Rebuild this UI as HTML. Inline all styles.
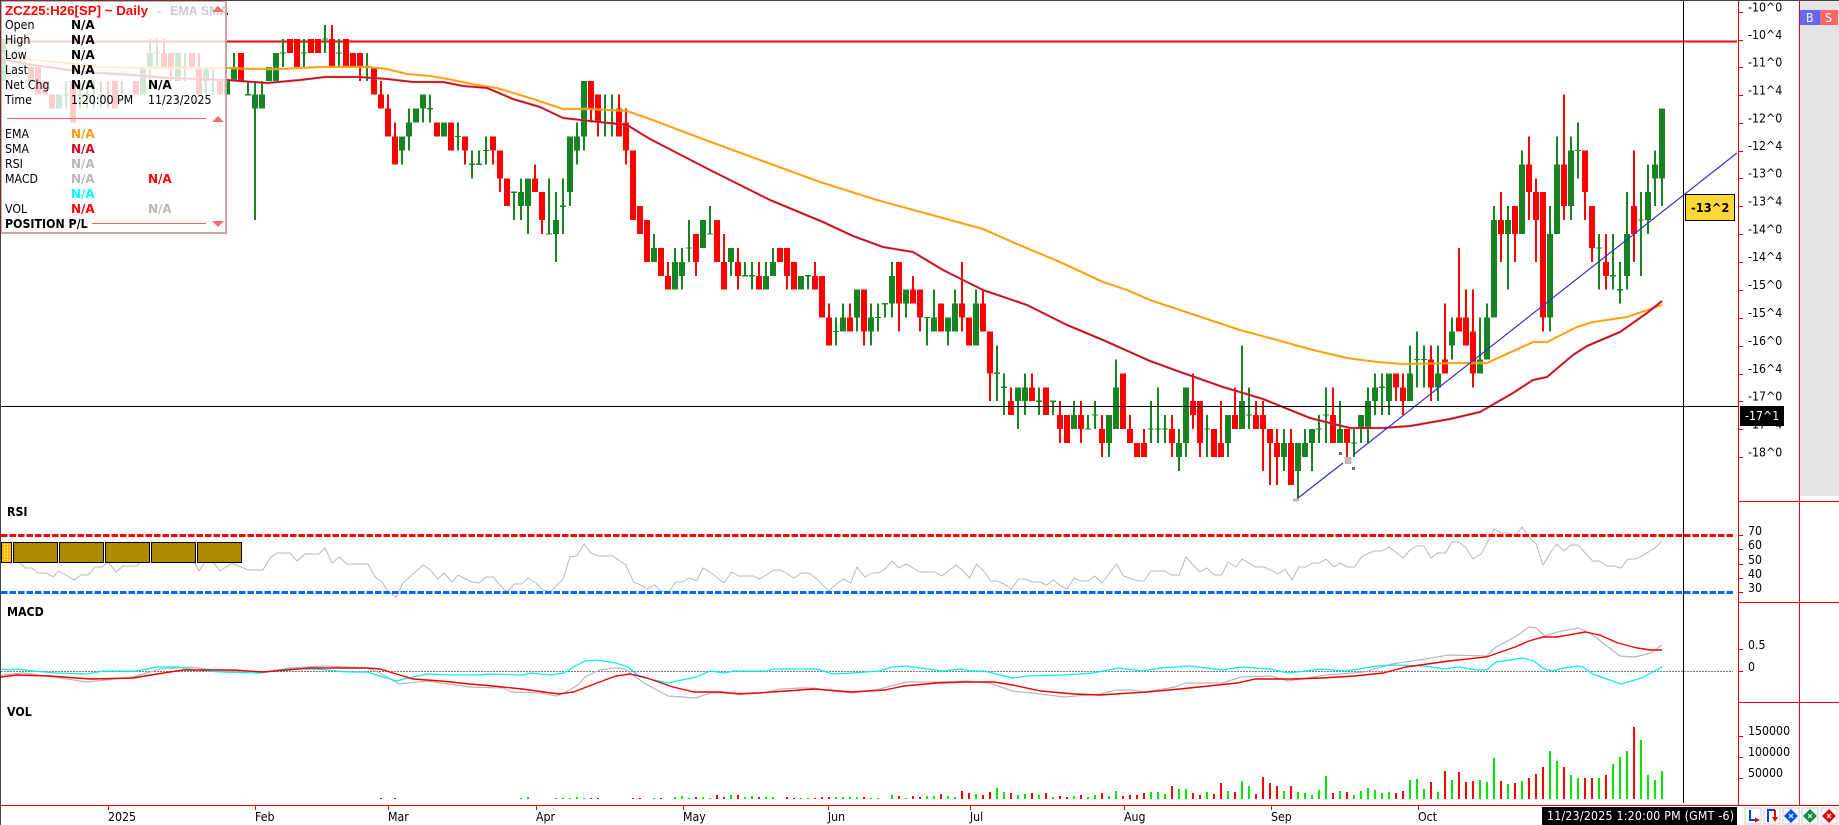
<!DOCTYPE html>
<html lang="en">
<head>
<meta charset="utf-8">
<title>ZCZ25:H26[SP] Daily</title>
<style>
html,body{margin:0;padding:0;background:#fff;width:1839px;height:825px;overflow:hidden}
svg{position:absolute;left:0;top:0;display:block}
text{font-family:"DejaVu Sans","Liberation Sans",sans-serif;font-size:12px;fill:#000;transform-box:fill-box;transform-origin:0 50%;transform:scaleX(.92)}
.b{font-weight:bold}
.n{font-weight:bold;transform:none}
.t{font-family:"Liberation Sans",sans-serif;font-weight:bold;font-size:13.3px;transform:none}
</style>
</head>
<body>
<svg width="1839" height="825" viewBox="0 0 1839 825" xmlns="http://www.w3.org/2000/svg">
<defs>
<pattern id="hatch" width="3" height="3" patternUnits="userSpaceOnUse"><rect width="3" height="3" fill="#ffbf00"/><rect x="1" y="1" width="1" height="1" fill="#fff3b0"/></pattern>
</defs>
<rect width="1839" height="825" fill="#fff"/>
<rect x="1800" y="1" width="39" height="495" fill="#e4e4e4"/>

<!-- horizontal resistance line -->
<path d="M1 41.5H1737" stroke="#ff9a9a" stroke-width="3" fill="none" shape-rendering="crispEdges"/>
<path d="M1 41.5H1737" stroke="#e8141f" stroke-width="1.6" fill="none"/>

<!-- candles -->
<g transform="translate(3,39) scale(7,13.93)" fill="none" shape-rendering="crispEdges">
<path stroke="#178423" stroke-width=".286" d="M9 3V5M11 3V5M12 3V5M13 3V5M14 3V5M17 3V4M21 0V3M22 0V2M26 1V3M29 2V4M30 2V4M33 1V3M35 3V4M36 3V13M37 3V5M40 0V2M43 0V2M46 -1V1M48 0V2M52 1V3M57 7V9M58 5V8M60 4V6M61 4V6M65 6V8M67 8V10M68 8V9M69 7V9M73 11V13M74 10V13M75 10V14M78 10V14M79 11V16M80 10V14M81 7V12M82 6V9M83 3V8M86 4V7M87 4V7M93 14V16M96 15V18M97 15V18M98 13V16M101 12V14M104 15V17M106 16V17M107 16V18M109 16V18M110 15V17M115 17V18M119 20V22M120 19V21M122 18V21M124 19V22M125 19V21M126 19V20M127 16V20M129 18V20M132 20V22M133 18V21M135 20V22M136 18V21M139 18V22M142 22V26M143 24V27M145 25V28M146 24V27M148 25V27M150 26V27M153 26V28M155 27V28M156 26V28M158 27V30M159 23V28M164 26V29M165 25V29M166 27V29M168 28V31M169 25V30M172 27V30M175 27V30M177 22V28M178 25V28M183 28V31M185 29V33M186 28V30M187 28V31M188 27V29M189 25V29M191 26V29M193 28V30M194 27V29M195 25V29M196 24V27M197 24V27M198 24V27M201 22V26M202 21V25M203 22V25M205 22V26M207 20V23M211 20V24M212 19V23M213 12V20M215 12V18M217 8V14M221 12V21M222 7V14M224 7V13M225 6V10M228 14V18M230 14V18M231 16V19M232 11V18M234 11V17M235 9V14M236 8V12M237 5V12"/>
<path stroke="#178423" stroke-width=".857" d="M0 0V3M8 4V5M20 2V4M21 1V2M25 1V3M29 2V3M32 3V4M33 2V3M36 4V5M37 4V5M38 2V3M39 1V3M57 7V8M58 6V7M59 5V6M60 4V5M63 6V7M74 11V12M75 10V12M79 13V14M81 7V11M82 7V8M83 3V7M93 15V16M96 16V18M97 16V17M100 13V15M104 15V16M109 17V18M110 16V17M114 17V18M120 20V21M122 18V20M124 20V21M127 17V19M129 18V19M133 20V21M135 20V21M136 19V21M139 19V22M145 25V26M146 25V26M153 27V28M158 27V29M159 25V28M168 29V30M169 25V29M175 27V29M177 26V28M183 29V30M185 29V31M186 29V30M187 28V29M191 28V29M194 27V28M195 26V28M196 25V26M198 24V26M201 24V26M205 24V25M207 21V22M211 23V24M212 20V23M213 13V20M215 13V14M217 9V14M221 14V20M222 9V14M224 8V12M232 14V17M235 11V13M236 9V10M237 5V10"/>
<path stroke="#178423" stroke-width=".09" d="M8.57 4h.86M10.57 4h.86M11.57 4h.86M13.57 4h.86M21.57 1h.86M25.57 2h.86M34.57 4h.86M39.57 1h.86M42.57 1h.86M45.57 0h.86M47.57 1h.86M51.57 2h.86M60.57 5h.86M64.57 7h.86M66.57 9h.86M67.57 9h.86M68.57 8h.86M72.57 11h.86M77.57 14h.86M79.57 12h.86M85.57 6h.86M86.57 6h.86M97.57 15h.86M100.57 14h.86M105.57 17h.86M106.57 17h.86M114.57 17h.86M118.57 21h.86M124.57 20h.86M125.57 19h.86M131.57 20h.86M141.57 24h.86M142.57 25h.86M147.57 26h.86M149.57 26h.86M154.57 28h.86M155.57 27h.86M163.57 28h.86M164.57 28h.86M165.57 28h.86M171.57 28h.86M177.57 27h.86M187.57 28h.86M188.57 27h.86M192.57 29h.86M196.57 25h.86M201.57 23h.86M202.57 23h.86M224.57 8h.86M227.57 15h.86M229.57 17h.86M230.57 18h.86M233.57 13h.86"/>
<path stroke="#ff0000" stroke-width=".286" d="M15 3V5M23 0V2M24 1V3M28 1V4M47 -1V2M51 1V3M54 3V5M55 4V7M56 6V9M66 7V9M70 7V9M71 8V11M76 9V11M77 11V14M84 3V6M85 4V7M88 4V7M89 5V9M95 16V18M99 14V17M103 14V18M105 15V18M108 16V18M112 15V18M116 16V18M118 19V22M121 19V21M123 18V22M128 16V21M130 17V19M131 18V21M137 16V21M140 18V21M141 21V26M144 25V27M147 24V26M151 26V29M154 26V29M157 27V30M161 27V29M163 28V30M167 27V30M170 24V28M171 26V30M174 26V30M176 25V28M179 26V28M180 26V31M181 28V32M182 28V32M184 28V32M190 25V29M192 28V30M199 24V26M200 24V27M204 22V26M206 19V24M208 15V21M209 18V22M210 18V25M214 11V16M216 12V16M218 7V13M219 10V16M220 11V21M223 4V13M226 8V13M227 12V16M229 14V18M233 8V16"/>
<path stroke="#ff0000" stroke-width=".857" d="M4 2V3M5 2V4M6 3V4M7 4V5M10 3V6M16 3V5M19 3V4M23 1V2M24 1V2M27 1V2M28 2V4M31 3V4M34 1V3M41 0V1M42 0V2M44 0V1M45 0V1M47 0V2M49 0V2M50 1V2M51 1V2M53 2V4M54 4V5M55 5V7M56 7V9M62 6V7M64 6V8M66 7V8M70 7V8M71 8V10M72 10V12M76 10V11M77 11V13M84 3V5M85 4V6M88 5V7M89 6V8M90 8V13M91 12V14M92 13V16M94 15V17M95 17V18M99 14V16M102 13V16M103 16V18M105 16V17M108 17V18M111 15V16M112 15V17M113 16V18M116 17V18M117 17V20M118 20V22M121 20V21M123 18V21M128 16V19M130 18V19M131 18V20M134 19V21M137 19V20M138 20V22M140 19V21M141 21V24M144 26V27M147 25V26M149 25V27M151 27V28M152 27V29M154 27V28M157 28V29M160 24V28M161 28V29M162 29V30M163 29V30M167 28V29M170 26V27M171 26V29M173 28V30M174 29V30M176 27V28M179 27V28M180 27V28M181 28V29M182 29V30M184 29V32M190 27V29M192 28V29M199 24V25M200 25V26M204 23V25M206 23V24M208 20V21M209 20V22M210 21V24M214 13V14M216 12V14M218 9V11M219 11V13M220 11V20M223 9V12M226 8V11M227 12V15M229 16V17M233 12V14"/>
</g>

<!-- moving averages -->
<g fill="none" stroke-linejoin="round">
<polyline stroke="#ffcf80" stroke-width="3" opacity=".35" points="0,55 7,56 33,60 67,63 100,67 150,68 227,68 253,69 280,69 300,68 320,67 367,67 387,69 407,74 430,76 453,80 477,85 497,88 533,99 563,109 590,109 627,111 650,119 700,138 760,160 820,182 877,200 983,229 1017,244 1060,262 1103,282 1127,290 1150,300 1195,315 1240,330 1277,340 1313,350 1347,358 1377,362 1403,364 1457,363 1487,363 1533,342 1547,342 1577,327 1593,322 1627,317 1662,305"/>
<polyline stroke="#ff9d0a" stroke-width="1.8" points="0,55 7,56 33,60 67,63 100,67 150,68 227,68 253,69 280,69 300,68 320,67 367,67 387,69 407,74 430,76 453,80 477,85 497,88 533,99 563,109 590,109 627,111 650,119 700,138 760,160 820,182 877,200 983,229 1017,244 1060,262 1103,282 1127,290 1150,300 1195,315 1240,330 1277,340 1313,350 1347,358 1377,362 1403,364 1457,363 1487,363 1533,342 1547,342 1577,327 1593,322 1627,317 1662,305"/>
<polyline stroke="#e88a90" stroke-width="3" opacity=".4" points="0,59 33,65 83,72 133,75 167,78 227,80 267,83 300,80 325,77 360,77 387,79 413,82 443,82 463,86 487,88 513,99 540,107 563,118 590,121 627,125 650,139 710,170 770,200 823,222 853,236 883,247 913,252 943,270 983,290 1027,305 1067,325 1103,340 1150,361 1183,373 1223,387 1263,399 1310,418 1350,428 1383,428 1410,426 1450,419 1480,412 1513,393 1533,380 1547,377 1573,355 1587,346 1620,332 1647,313 1662,301"/>
<polyline stroke="#c30f1d" stroke-width="1.8" points="0,59 33,65 83,72 133,75 167,78 227,80 267,83 300,80 325,77 360,77 387,79 413,82 443,82 463,86 487,88 513,99 540,107 563,118 590,121 627,125 650,139 710,170 770,200 823,222 853,236 883,247 913,252 943,270 983,290 1027,305 1067,325 1103,340 1150,361 1183,373 1223,387 1263,399 1310,418 1350,428 1383,428 1410,426 1450,419 1480,412 1513,393 1533,380 1547,377 1573,355 1587,346 1620,332 1647,313 1662,301"/>
</g>

<!-- trendline -->
<path d="M1298 498L1343 463M1353 455L1737 153" stroke="#3232c8" stroke-width="1.2" fill="none"/>
<rect x="1293" y="498.5" width="6" height="3" fill="#bbb"/>
<rect x="1345" y="457.5" width="6" height="6" fill="#bdbdbd" stroke="#999" stroke-width=".5"/>
<rect x="1339" y="452" width="3" height="3" fill="#666"/>
<rect x="1352" y="467" width="3" height="3" fill="#666"/>

<!-- crosshair -->
<path d="M1 406.5H1738M1683.5 1V803" stroke="#000" stroke-width="1" fill="none" shape-rendering="crispEdges"/>

<!-- RSI -->
<text class="b" x="7" y="516">RSI</text>
<polyline fill="none" stroke="#b8b8b8" stroke-width="1" points="13,560 20,563 25,568 32,568 38,573 46,573 53,577 59,571 74,580 81,575 88,575 95,567 102,567 108,562 116,572 123,566 137,566 143,558 195,563 199,571 205,562 213,562 220,571 232,563 248,570 263,570 270,558 277,553 290,553 297,561 305,554 319,554 325,548 332,563 339,557 347,564 368,564 375,577 382,582 388.5,592 396,597 403,583 423,565 430.5,570 437.6,579 444,573 452,582 458,575 465.4,579 472,582 479,583 486,577 493,577 500,585 506.5,592 514.5,584 521.6,584 528,578 536,583 543,590 550,592 563,579 570,557 577,556 584,544 591,553 598.5,556 612.7,556 620,561 626,565 633.5,582 640.5,585 647.6,589 654.7,585 661,591 668.4,592 676,582 682.5,582 689.6,578 696.7,581 703,568 710,572 724,583 731.6,572 738.7,576 753,576 760,579 774,570 781,570 794,578 801.5,573 808.6,573 815.6,578 829,591 836.4,584 843.5,579 850.6,583 857,567 865,577 872,573 878.5,573 885,569 892,561 899,568 906,564 920,572 934.6,572 941.7,576 956,565 963,571 969.5,578 976.6,564 983.7,571 990.7,581 997,581 1004,584 1011.5,589 1018.6,579 1025,579 1032.5,582 1039.6,582 1046.6,585 1053.5,580 1060.6,586 1067,589 1074,578 1081,581 1088,581 1095,576 1102,583 1116.5,564 1123.6,576 1138,581 1144,581 1151,571 1165,571 1171.6,575 1179,575 1186,557 1193,565 1200,572 1207,568 1214.5,575 1221.6,575 1228,562 1236,567 1242,559 1255.5,567 1264,567 1278,574 1285,569 1292,580 1299,567 1305.5,567 1312.6,563 1319.6,563 1326,559 1334,567 1340,563 1347.4,567 1354.5,567 1361.6,557 1368.6,553 1375,551 1382,551 1389,547 1403,558 1410,550 1416.7,546 1424,546 1431,558 1438,553 1445.5,553 1452,542 1459,542 1466,548 1473,559 1481,554 1487,543 1494,529 1501,533 1508,533 1515,536 1522,527 1529,537 1536,544 1543,565 1551.5,551 1557,544 1564,551 1571,545 1578,545 1592.5,561 1599.6,561 1606.6,566 1613.7,566 1621,568 1628,559 1635,559 1642,556 1655,548 1662,541"/>
<path d="M1 535.5H1733" stroke="#ff0000" stroke-width="3" stroke-dasharray="6.5 2" fill="none" shape-rendering="crispEdges"/>
<path d="M1 592.5H1733" stroke="#0066ff" stroke-width="3" stroke-dasharray="6.5 2" fill="none" shape-rendering="crispEdges"/>
<rect x="1.5" y="542.5" width="10" height="20" fill="url(#hatch)" stroke="#000"/>
<g fill="#ad8a00" stroke="#000" stroke-width="1" shape-rendering="crispEdges">
<rect x="13.5" y="542.5" width="44" height="20"/>
<rect x="59.5" y="542.5" width="44" height="20"/>
<rect x="105.5" y="542.5" width="44" height="20"/>
<rect x="151.5" y="542.5" width="44" height="20"/>
<rect x="197.5" y="542.5" width="44" height="20"/>
</g>

<!-- MACD -->
<text class="b" x="7" y="616">MACD</text>
<path d="M1 671.5H1733" stroke="#777" stroke-width="1" stroke-dasharray="2 1" fill="none" shape-rendering="crispEdges"/>
<polyline fill="none" stroke="#b8b8b8" stroke-width="1.2" points="1,675 23,673 53,677 87,682 133,677 160,669 190,667 213,670 263,672 290,668 323,666 367,668 380,673 399,684 427,681 470,687 503,688 512,692 540.5,693 557,696 564,693 578,685 585,677 599.5,670 614,668 625,669 644,683 668,696 696,698 710,693 724.6,693 739,693 762,693 781,689 800,688 814,688 833,691 852,693 880,689 906,682 937,682 965,681 989,683 1012.5,691 1041,694 1064,697 1100,694 1116.5,690 1131,690 1145,692 1175,687 1185,683 1222.5,683 1241,677 1270,676 1288.5,681 1326,675 1364,672 1392,664 1425,659 1449,655 1486.5,656 1496,647 1515,637 1529,627 1536,628 1545,636 1557,632 1578,628 1590,633 1620,656 1635,657 1651,653 1662,645"/>
<polyline fill="none" stroke="#00f0f0" stroke-width="1.2" points="1,669 10,670 17,669 33,671 57,673 87,674 103,671 137,671 157,667 177,667 197,670 220,672 260,673 287,669 317,669 347,672 367,672 380,676 396.5,681 408,678 427,674 451,675 474,675 493,674 522,675 531,673 550,675 564,673 573.5,667 585,661 597,660 616,663 628,667 640,677 668,683 696,677 710,671 724.6,673 734,671 767,671 774,669 816.6,669 833,674 852,673 880,671 892,667 906,666 927.5,669 942,671 960.6,669 970,671 984,671 1012.5,678 1027,676 1064,675 1093,673 1119,668 1142,671 1161,668 1190,666 1222.5,670 1241,667 1270,669 1288.5,673 1321.5,669 1345,671 1378,666 1392,665 1425,666 1444,669 1458,667 1477,670 1486.5,670 1496,662 1510,660 1522,658 1534,661 1544,669 1552.4,671 1559.5,669 1576,666 1583,667 1592.5,674 1621,684 1642,678 1662,667"/>
<polyline fill="none" stroke="#f00000" stroke-width="1.4" points="1,677 17,675 50,676 90,679 133,678 157,674 183,670 233,670 263,672 310,668 367,668 380,669 413,679 441,681 470,684 493,686 522,689 559,694 573.5,692 597,683 616,676 630,674 644,677 673,687 694,692 720,692 739,694 758,693 786,691 814,689 852,692 885,690 904,686 937,683 965,682 994,682 1012.5,685 1041,691 1074,694 1100,695 1147,692 1180,689 1237,683 1255.5,679 1293,679 1321.5,678 1354.5,676 1383,673 1406,667 1449,661 1486.5,657 1515,647 1529,641 1543,637 1557,637 1585,632 1599.6,635 1618,643 1637,648 1651,650 1662,650"/>

<!-- VOL -->
<text class="b" x="7" y="716">VOL</text>
<g transform="translate(3,799) scale(7,-1)" fill="none" stroke-width=".286" shape-rendering="crispEdges">
<path stroke="#00e600" d="M74 0V1M75 0V2M79 0V1M80 0V1M81 0V1M82 0V2M83 0V1M93 0V1M96 0V2M97 0V3M98 0V1M100 0V2M101 0V1M104 0V4M106 0V2M107 0V3M109 0V2M110 0V2M114 0V1M115 0V1M119 0V2M120 0V2M121 0V2M122 0V2M124 0V1M125 0V1M127 0V4M129 0V1M132 0V3M133 0V3M135 0V3M136 0V2M139 0V5M142 0V11M143 0V7M145 0V4M146 0V5M148 0V4M150 0V2M153 0V3M155 0V2M156 0V4M158 0V3M159 0V8M164 0V7M165 0V7M166 0V5M168 0V10M169 0V10M172 0V7M175 0V8M177 0V18M178 0V13M183 0V8M185 0V7M186 0V6M187 0V4M188 0V9M189 0V23M191 0V8M193 0V4M194 0V8M195 0V11M196 0V9M197 0V6M198 0V7M201 0V19M202 0V20M203 0V10M205 0V7M207 0V19M211 0V19M212 0V17M213 0V41M215 0V15M217 0V18M221 0V48M222 0V38M224 0V24M225 0V21M228 0V21M230 0V35M231 0V42M232 0V48M234 0V59M235 0V24M236 0V19M237 0V28"/>
<path stroke="#ff0000" d="M54 0V1M56 0V1M84 0V1M85 0V1M90 0V1M91 0V1M94 0V1M99 0V2M102 0V4M103 0V2M105 0V4M108 0V2M112 0V2M113 0V1M116 0V1M117 0V2M118 0V2M123 0V2M128 0V3M130 0V3M131 0V2M134 0V5M137 0V8M138 0V6M140 0V4M141 0V7M144 0V6M147 0V6M149 0V6M151 0V3M152 0V2M154 0V4M157 0V6M160 0V3M161 0V4M162 0V4M163 0V6M167 0V13M170 0V6M171 0V4M173 0V5M174 0V16M176 0V7M179 0V5M180 0V22M181 0V16M182 0V13M184 0V13M190 0V6M192 0V7M199 0V6M200 0V8M204 0V17M206 0V28M208 0V27M209 0V17M210 0V18M214 0V18M216 0V16M218 0V21M219 0V25M220 0V32M223 0V32M226 0V21M227 0V21M229 0V24M233 0V72"/>
</g>

<!-- frame -->
<path d="M0 .5H1839M.5 0V825" stroke="#444" stroke-width="1" fill="none" shape-rendering="crispEdges"/>
<g stroke="#ee0000" stroke-width="1" fill="none" shape-rendering="crispEdges">
<path d="M1738.5 1V805M1799.5 1V805"/>
<path d="M1 805.5H1839"/>
<path d="M1738 501.5H1839M1738 602.5H1839M1738 702.5H1839"/>
<path d="M1738 12.5h5M1738 40.5h5M1738 67.5h5M1738 95.5h5M1738 123.5h5M1738 151.5h5M1738 178.5h5M1738 206.5h5M1738 234.5h5M1738 262.5h5M1738 290.5h5M1738 318.5h5M1738 346.5h5M1738 374.5h5M1738 401.5h5M1738 429.5h5M1738 457.5h5"/>
<path d="M1738 535.5h5M1738 549.5h5M1738 564.5h5M1738 578.5h5M1738 592.5h5M1738 649.5h5M1738 671.5h5M1738 736.5h5M1738 757.5h5M1738 778.5h5"/>
<path d="M108.5 805v5M255.5 805v5M388.5 805v5M536.5 805v5M683.5 805v5M828.5 805v5M970.5 805v5M1124.5 805v5M1271.5 805v5M1418.5 805v5"/>
</g>

<!-- right axis labels -->
<g>
<text x="1748" y="11.5">-10^0</text>
<text x="1748" y="39">-10^4</text>
<text x="1748" y="66.5">-11^0</text>
<text x="1748" y="94.5">-11^4</text>
<text x="1748" y="122.5">-12^0</text>
<text x="1748" y="150">-12^4</text>
<text x="1748" y="177.5">-13^0</text>
<text x="1748" y="205.5">-13^4</text>
<text x="1748" y="233.5">-14^0</text>
<text x="1748" y="261">-14^4</text>
<text x="1748" y="289">-15^0</text>
<text x="1748" y="317">-15^4</text>
<text x="1748" y="345">-16^0</text>
<text x="1748" y="373">-16^4</text>
<text x="1748" y="400.5">-17^0</text>
<text x="1748" y="428.5">-17^4</text>
<text x="1748" y="456.5">-18^0</text>
<text x="1748" y="535">70</text>
<text x="1748" y="549">60</text>
<text x="1748" y="564">50</text>
<text x="1748" y="578">40</text>
<text x="1748" y="592">30</text>
<text x="1748" y="649">0.5</text>
<text x="1748" y="671">0</text>
<text x="1748" y="735">150000</text>
<text x="1748" y="756">100000</text>
<text x="1748" y="777">50000</text>
</g>

<!-- price tags -->
<rect x="1740" y="406" width="44" height="20" fill="#000"/>
<text x="1745" y="420" style="fill:#fff">-17^1</text>
<rect x="1685.5" y="194.5" width="49" height="26" fill="#ffd633" stroke="#000"/>
<text class="b" x="1691" y="212" style="font-size:12.5px">-13^2</text>

<!-- B / S -->
<rect x="1800" y="10" width="20" height="15" fill="#6666ff"/>
<rect x="1820" y="10" width="18" height="15" fill="#ff6666"/>
<text x="1806" y="22" style="fill:#fff">B</text>
<text x="1825" y="22" style="fill:#fff">S</text>

<!-- bottom axis -->
<text x="108" y="821">2025</text>
<text x="255" y="821">Feb</text>
<text x="388" y="821">Mar</text>
<text x="536" y="821">Apr</text>
<text x="683" y="821">May</text>
<text x="828" y="821">Jun</text>
<text x="970" y="821">Jul</text>
<text x="1124" y="821">Aug</text>
<text x="1271" y="821">Sep</text>
<text x="1418" y="821">Oct</text>
<rect x="1542" y="807" width="195" height="18" fill="#000"/>
<text x="1547" y="820" style="fill:#fff;letter-spacing:.24px">11/23/2025 1:20:00 PM (GMT -6)</text>

<!-- bottom icons -->
<g>
<rect x="1745" y="808" width="16" height="16" fill="#fff" stroke="#ccc"/>
<path d="M1750 810V820H1755" stroke="#0a3cff" stroke-width="2" fill="none"/>
<path d="M1755 817.5L1760 820L1755 822.5Z" fill="#e00"/>
<rect x="1764" y="808" width="16" height="16" fill="#fff" stroke="#ccc"/>
<path d="M1768 822V810H1775" stroke="#0a3cff" stroke-width="2" fill="none"/>
<path d="M1775 810V818" stroke="#e00" stroke-width="2" fill="none"/>
<path d="M1772 817H1778L1775 822Z" fill="#e00"/>
<rect x="1783" y="808" width="16" height="16" fill="#fff" stroke="#ccc"/>
<path d="M1791 809L1798 816L1791 823L1784 816Z" fill="#0a50ff"/>
<path d="M1789 814L1793 818M1793 814L1789 818" stroke="#fff" stroke-width="1.2"/>
<rect x="1802" y="808" width="16" height="16" fill="#fff" stroke="#ccc"/>
<path d="M1810 809L1817 816L1810 823L1803 816Z" fill="#0f8a3c"/>
<path d="M1808 814L1812 818M1812 814L1808 818" stroke="#fff" stroke-width="1.2"/>
<rect x="1821" y="808" width="16" height="16" fill="#fff" stroke="#ccc"/>
<path d="M1829 809L1836 816L1829 823L1822 816Z" fill="#e60012"/>
<path d="M1827 814L1831 818M1831 814L1827 818" stroke="#fff" stroke-width="1.2"/>
</g>

<!-- chart title underlay -->
<text class="t" x="157" y="15" style="font-size:13px">-</text>
<text class="t" x="170" y="15" style="font-size:12.5px">EMA SMA</text>

<!-- data window -->
<rect x="1" y="1" width="224" height="231" fill="#fff" fill-opacity=".8"/>
<rect x="1.5" y="1.5" width="224" height="231" fill="none" stroke="#e99" stroke-width="1" shape-rendering="crispEdges"/>
<path d="M226.5 1V233.5H1" stroke="#aaa" stroke-width="1" fill="none" shape-rendering="crispEdges"/>
<path d="M7 118.5H206M92 223.5H206" stroke="#f0605c" stroke-width="1" fill="none" shape-rendering="crispEdges"/>
<path d="M212 12L218 6L224 12Z M212 122L218 116L224 122Z" fill="#ff6a6a"/>
<path d="M212 221L224 221L218 227Z" fill="#ff6a6a"/>
<text class="t" x="5" y="15" style="fill:#ff0000">ZCZ25:H26[SP] ~ Daily</text>
<g>
<text x="5" y="29">Open</text>
<text x="5" y="44">High</text>
<text x="5" y="59">Low</text>
<text x="5" y="74">Last</text>
<text x="5" y="89">Net Chg</text>
<text x="5" y="104">Time</text>
<text x="5" y="138">EMA</text>
<text x="5" y="153">SMA</text>
<text x="5" y="168">RSI</text>
<text x="5" y="183">MACD</text>
<text x="5" y="213">VOL</text>
<text class="b" x="5" y="228">POSITION P/L</text>
<text x="71" y="104">1:20:00 PM</text>
<text x="148" y="104">11/23/2025</text>
</g>
<g>
<text class="n" x="71" y="29">N/A</text>
<text class="n" x="71" y="44">N/A</text>
<text class="n" x="71" y="59">N/A</text>
<text class="n" x="71" y="74">N/A</text>
<text class="n" x="71" y="89">N/A</text>
<text class="n" x="148" y="89">N/A</text>
<text class="n" x="71" y="138" style="fill:#ff9d0a">N/A</text>
<text class="n" x="71" y="153" style="fill:#d00a1c">N/A</text>
<text class="n" x="71" y="168" style="fill:#b8b8b8">N/A</text>
<text class="n" x="71" y="183" style="fill:#b8b8b8">N/A</text>
<text class="n" x="148" y="183" style="fill:#ff0000">N/A</text>
<text class="n" x="71" y="198" style="fill:#00ffff">N/A</text>
<text class="n" x="71" y="213" style="fill:#ff0000">N/A</text>
<text class="n" x="148" y="213" style="fill:#b8b8b8">N/A</text>
</g>
</svg>
</body>
</html>
